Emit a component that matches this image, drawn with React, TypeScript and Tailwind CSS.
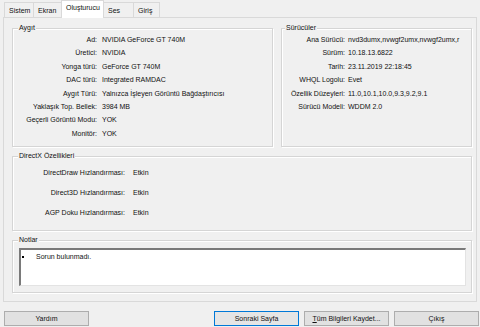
const tabs = [
  { name: "Sistem", w: "w-[29px]" },
  { name: "Ekran", w: "w-[28px]" },
  { name: "Oluşturucu", w: "w-[43px]", active: true },
  { name: "Ses", w: "w-[29px]" },
  { name: "Giriş", w: "w-[27px]" },
];

const device = [
  ["Ad:", "NVIDIA GeForce GT 740M"],
  ["Üretici:", "NVIDIA"],
  ["Yonga türü:", "GeForce GT 740M"],
  ["DAC türü:", "Integrated RAMDAC"],
  ["Aygıt Türü:", "Yalnızca İşleyen Görüntü Bağdaştırıcısı"],
  ["Yaklaşık Top. Bellek:", "3984 MB"],
  ["Geçerli Görüntü Modu:", "YOK"],
  ["Monitör:", "YOK"],
];

const drivers = [
  ["Ana Sürücü:", "nvd3dumx,nvwgf2umx,nvwgf2umx,r"],
  ["Sürüm:", "10.18.13.6822"],
  ["Tarih:", "23.11.2019 22:18:45"],
  ["WHQL Logolu:", "Evet"],
  ["Özellik Düzeyleri:", "11.0,10.1,10.0,9.3,9.2,9.1"],
  ["Sürücü Modeli:", "WDDM 2.0"],
];

const directx = [
  ["DirectDraw Hızlandırması:", "Etkin"],
  ["Direct3D Hızlandırması:", "Etkin"],
  ["AGP Doku Hızlandırması:", "Etkin"],
];

const group =
  "border border-[#d5d5d5] shadow-[inset_1px_1px_0_#fff,1px_1px_0_#fff]";

function Legend({ children, ml }: { children: string; ml: string }) {
  return (
    <legend className={`${ml} px-[1px] leading-[8px] bg-[#f0f0f0]`}>{children}</legend>
  );
}

export default function App() {
  return (
    <div
      className="w-[480px] h-[327px] bg-[#f0f0f0] text-[7px] text-[#111] overflow-hidden flex flex-col"
      style={{ fontFamily: '"Liberation Sans", Arial, sans-serif' }}
    >
      {/* tabs */}
      <div className="flex items-end pl-[4px] h-[17px]">
        {tabs.map((t, i) =>
          t.active ? (
            <div
              key={t.name}
              className={`${t.w} h-[18px] -mb-px relative z-10 bg-white border border-b-0 border-[#d9d9d9] pl-[4px] leading-[14px]`}
            >
              {t.name}
            </div>
          ) : (
            <div
              key={t.name}
              className={`${t.w} h-[15px] bg-[#f0f0f0] border-t border-[#d9d9d9] pl-[4px] leading-[15px] ${
                i === 0 || i === 1 || i === 4 ? "border-l" : ""
              } ${i === tabs.length - 1 ? "border-r" : ""}`}
            >
              {t.name}
            </div>
          )
        )}
      </div>

      {/* panel */}
      <div className="ml-[3px] w-[474px] border border-[#d9d9d9] bg-[#f0f0f0] pt-[6px] pb-[8px] pl-[8px] pr-[4px] flex flex-col gap-[5px]">
        <div className="flex gap-[8px] h-[123px]">
          <fieldset className={`w-[261px] h-[123px] ${group}`}>
            <Legend ml="ml-[5px]">Aygıt</Legend>
            <div className="grid grid-cols-[84px_1fr] gap-x-[5px] pt-[1px] leading-[13.4px] whitespace-nowrap">
              {device.map(([k, v]) => (
                <div key={k} className="contents">
                  <div className="text-right">{k}</div>
                  <div>{v}</div>
                </div>
              ))}
            </div>
          </fieldset>
          <fieldset className={`w-[191px] h-[123px] ${group}`}>
            <Legend ml="ml-[3px]">Sürücüler</Legend>
            <div className="grid grid-cols-[63px_1fr] gap-x-[3px] pt-[1px] leading-[13.4px] whitespace-nowrap">
              {drivers.map(([k, v]) => (
                <div key={k} className="contents">
                  <div className="text-right">{k}</div>
                  <div>{v}</div>
                </div>
              ))}
            </div>
          </fieldset>
        </div>

        <fieldset className={`w-[460px] h-[79px] ${group}`}>
          <Legend ml="ml-[5px]">DirectX Özellikleri</Legend>
          <div className="grid grid-cols-[112px_1fr] gap-x-[8px] pt-[3px] leading-[20px] whitespace-nowrap">
            {directx.map(([k, v]) => (
              <div key={k} className="contents">
                <div className="text-right">{k}</div>
                <div>{v}</div>
              </div>
            ))}
          </div>
        </fieldset>

        <fieldset className={`w-[460px] h-[57px] ${group}`}>
          <Legend ml="ml-[5px]">Notlar</Legend>
          <div className="pt-[4px] pl-[6px] pr-[5px]">
            <div className="h-[38px] bg-white border-t-2 border-l-2 border-t-[#7a7a7a] border-l-[#7a7a7a] border-r border-b border-r-[#e3e3e3] border-b-[#e3e3e3] flex items-start pt-[2px]">
              <span className="w-[2px] h-[2px] bg-black mt-[4px] ml-[1px]" />
              <span className="ml-[12px] leading-[10px]">Sorun bulunmadı.</span>
            </div>
          </div>
        </fieldset>
      </div>

      {/* buttons */}
      <div className="flex pt-[9px] pl-[4px] pr-[1px]">
        <button className="w-[85px] h-[15px] bg-[#e1e1e1] border border-[#adadad] leading-[13px]">
          Yardım
        </button>
        <div className="flex-1" />
        <div className="flex gap-[5px]">
          <button className="w-[85px] h-[15px] bg-[#e5e5e5] border border-[#0078d7] leading-[13px]">
            Sonraki Sayfa
          </button>
          <button className="w-[85px] h-[15px] bg-[#e1e1e1] border border-[#adadad] leading-[13px]">
            <span className="underline">T</span>üm Bilgileri Kaydet...
          </button>
          <button className="w-[85px] h-[15px] bg-[#e1e1e1] border border-[#adadad] leading-[13px]">
            Çıkış
          </button>
        </div>
      </div>
    </div>
  );
}
